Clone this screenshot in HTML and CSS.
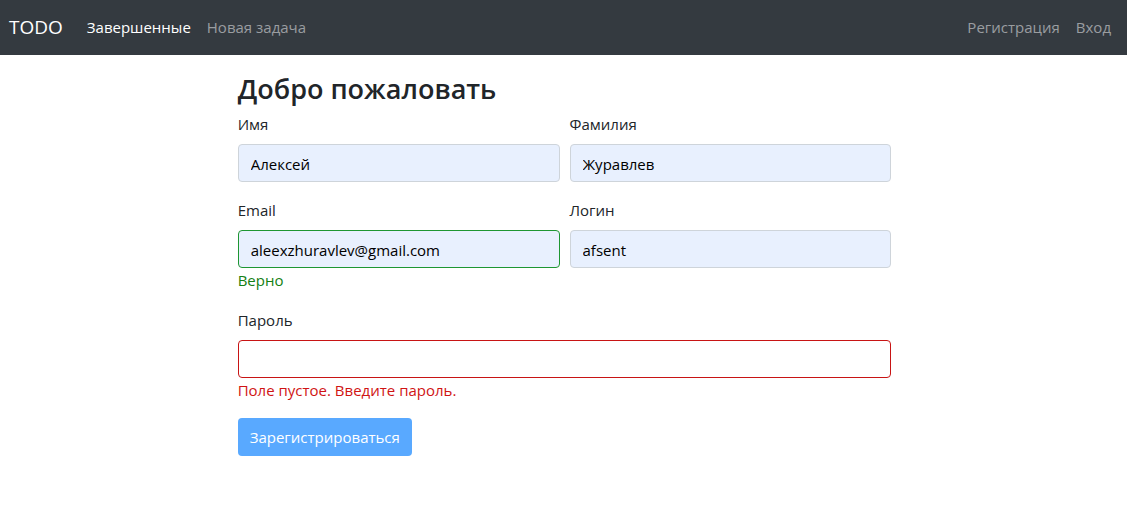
FILE: index.html
```html
<!DOCTYPE html>
<html lang="ru">
<head>
<meta charset="utf-8">
<title>TODO</title>
<link rel="stylesheet" href="styles.css">
</head>
<body>
<nav class="navbar">
  <a class="brand" href="#">TODO</a>
  <div class="nav-links">
    <a class="nav-link active" href="#">Завершенные</a>
    <a class="nav-link" href="#">Новая задача</a>
  </div>
  <div class="nav-links nav-end">
    <a class="nav-link" href="#">Регистрация</a>
    <a class="nav-link" href="#">Вход</a>
  </div>
</nav>
<main class="container">
  <h1 class="title">Добро пожаловать</h1>
  <form class="form">
    <div class="field">
      <label for="name">Имя</label>
      <input class="control filled" id="name" type="text" value="Алексей">
    </div>
    <div class="field">
      <label for="surname">Фамилия</label>
      <input class="control filled" id="surname" type="text" value="Журавлев">
    </div>
    <div class="field">
      <label for="email">Email</label>
      <input class="control filled valid" id="email" type="text" value="aleexzhuravlev@gmail.com">
      <div class="message ok">Верно</div>
    </div>
    <div class="field">
      <label for="login">Логин</label>
      <input class="control filled" id="login" type="text" value="afsent">
    </div>
    <div class="field wide">
      <label for="password">Пароль</label>
      <input class="control invalid" id="password" type="password">
      <div class="message error">Поле пустое. Введите пароль.</div>
    </div>
    <button class="submit" type="submit" disabled>Зарегистрироваться</button>
  </form>
</main>
</body>
</html>
```

FILE: styles.css
```css
* {
  box-sizing: border-box;
}

body {
  margin: 0;
  background: #fff;
  color: #212529;
  font: 15px/24px "Open Sans", "Noto Sans", sans-serif;
}

.navbar {
  display: flex;
  align-items: center;
  padding: 8px 8px 8px 9px;
  background: #343a40;
}

.brand {
  margin-right: 16px;
  color: #fff;
  font-size: 19px;
  line-height: 39px;
  text-decoration: none;
}

.nav-links {
  display: flex;
}

.nav-end {
  margin-left: auto;
}

.nav-link {
  padding: 7px 8px 8px;
  color: #9a9da0;
  text-decoration: none;
}

.nav-link.active {
  color: #fff;
}

.container {
  width: calc(58% + 32px);
  margin: 0 auto;
  padding: 17px 15px 0 17px;
}

.title {
  margin: 0 0 6px;
  font-size: 27px;
  font-weight: 600;
  line-height: 34px;
}

.form {
  display: grid;
  grid-template-columns: 1fr 1fr;
  gap: 16px 10px;
}

.field {
  display: flex;
  flex-direction: column;
}

.wide {
  grid-column: 1 / -1;
}

.field label {
  margin-bottom: 8px;
}

.control {
  width: 100%;
  height: 38px;
  padding: 8px 12px 6px;
  border: 1px solid #ced4da;
  border-radius: 4px;
  background: #fff;
  color: #000;
  font: inherit;
}

.filled {
  background: #e8f0fe;
}

.valid {
  border-color: #1e9632;
}

.invalid {
  border-color: #c81414;
}

.ok {
  color: #148014;
}

.error {
  color: #d01414;
}

.submit {
  justify-self: start;
  height: 38px;
  padding: 6px 12px;
  border: 0;
  border-radius: 4px;
  background: #59a9ff;
  color: #fff;
  font: inherit;
}
```
